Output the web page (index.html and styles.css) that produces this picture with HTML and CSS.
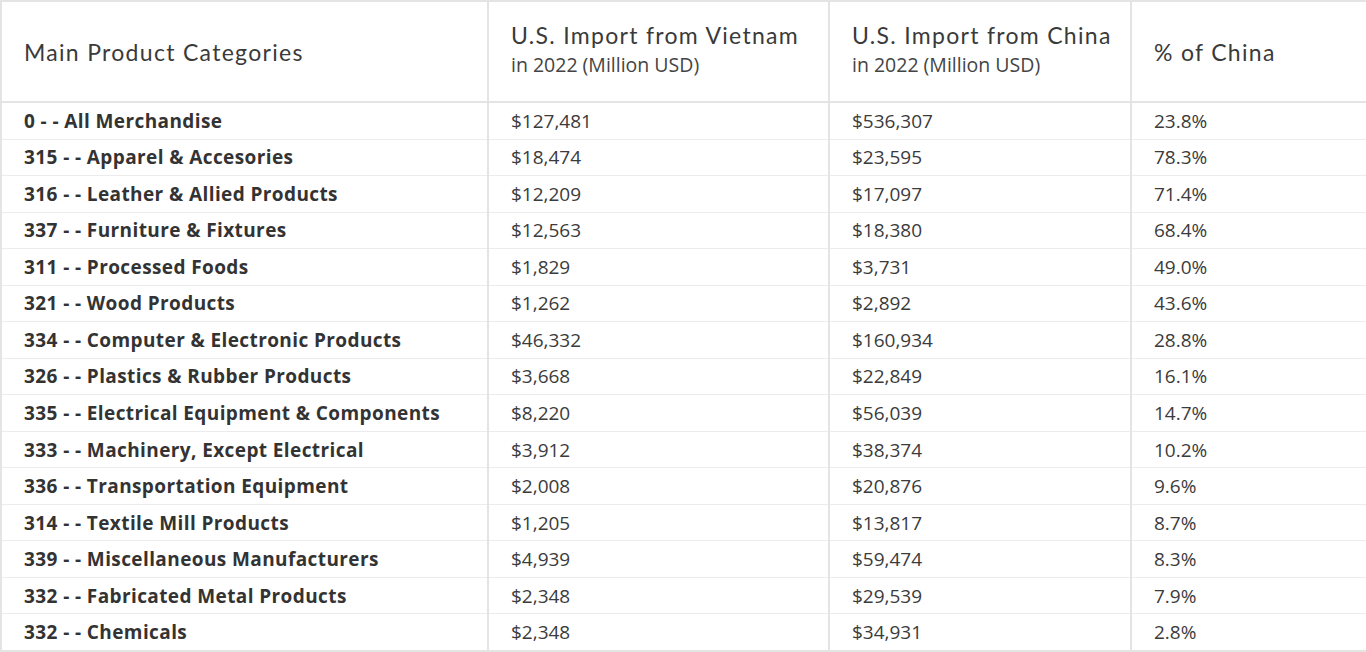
FILE: index.html
```html
<!DOCTYPE html>
<html lang="en">
<head>
<meta charset="utf-8">
<title>U.S. Imports from Vietnam vs China 2022</title>
<link rel="stylesheet" href="styles.css">
</head>
<body>
<table class="data-table">
  <colgroup>
    <col class="col-cat">
    <col class="col-vn">
    <col class="col-cn">
    <col class="col-pct">
  </colgroup>
  <thead>
    <tr>
      <th><span class="th-title">Main Product Categories</span></th>
      <th><span class="th-title">U.S. Import from Vietnam</span><span class="th-sub">in 2022 (Million USD)</span></th>
      <th><span class="th-title">U.S. Import from China</span><span class="th-sub">in 2022 (Million USD)</span></th>
      <th><span class="th-title">% of China</span></th>
    </tr>
  </thead>
  <tbody>
    <tr><td class="cat">0 - - All Merchandise</td><td>$127,481</td><td>$536,307</td><td>23.8%</td></tr>
    <tr><td class="cat">315 - - Apparel &amp; Accesories</td><td>$18,474</td><td>$23,595</td><td>78.3%</td></tr>
    <tr><td class="cat">316 - - Leather &amp; Allied Products</td><td>$12,209</td><td>$17,097</td><td>71.4%</td></tr>
    <tr><td class="cat">337 - - Furniture &amp; Fixtures</td><td>$12,563</td><td>$18,380</td><td>68.4%</td></tr>
    <tr><td class="cat">311 - - Processed Foods</td><td>$1,829</td><td>$3,731</td><td>49.0%</td></tr>
    <tr><td class="cat">321 - - Wood Products</td><td>$1,262</td><td>$2,892</td><td>43.6%</td></tr>
    <tr><td class="cat">334 - - Computer &amp; Electronic Products</td><td>$46,332</td><td>$160,934</td><td>28.8%</td></tr>
    <tr><td class="cat">326 - - Plastics &amp; Rubber Products</td><td>$3,668</td><td>$22,849</td><td>16.1%</td></tr>
    <tr><td class="cat">335 - - Electrical Equipment &amp; Components</td><td>$8,220</td><td>$56,039</td><td>14.7%</td></tr>
    <tr><td class="cat">333 - - Machinery, Except Electrical</td><td>$3,912</td><td>$38,374</td><td>10.2%</td></tr>
    <tr><td class="cat">336 - - Transportation Equipment</td><td>$2,008</td><td>$20,876</td><td>9.6%</td></tr>
    <tr><td class="cat">314 - - Textile Mill Products</td><td>$1,205</td><td>$13,817</td><td>8.7%</td></tr>
    <tr><td class="cat">339 - - Miscellaneous Manufacturers</td><td>$4,939</td><td>$59,474</td><td>8.3%</td></tr>
    <tr><td class="cat">332 - - Fabricated Metal Products</td><td>$2,348</td><td>$29,539</td><td>7.9%</td></tr>
    <tr><td class="cat">332 - - Chemicals</td><td>$2,348</td><td>$34,931</td><td>2.8%</td></tr>
  </tbody>
</table>
</body>
</html>
```
FILE: styles.css
```css
html, body {
  margin: 0;
  padding: 0;
  background: #ffffff;
}
body {
  font-family: "Open Sans", "Liberation Sans", sans-serif;
  color: #333333;
}
.data-table {
  width: 1366px;
  height: 652px;
  border-collapse: collapse;
  table-layout: fixed;
  border: 2px solid #e4e4e4;
}
.col-cat { width: 487px; }
.col-vn { width: 341px; }
.col-cn { width: 302px; }
.col-pct { width: 236px; }

.data-table th {
  height: 99px;
  padding: 0 0 0 22px;
  text-align: left;
  vertical-align: middle;
  font-weight: 400;
  border-left: 2px solid #e4e4e4;
  border-bottom: 2px solid #e4e4e4;
}
.th-title {
  display: block;
  font-family: "Lato", "Open Sans", sans-serif;
  font-weight: 400;
  font-size: 23px;
  letter-spacing: 1.3px;
  line-height: 28px;
  color: #3a3a3a;
}
.th-sub {
  display: block;
  font-size: 19.5px;
  line-height: 28px;
  color: #444444;
  margin-top: 2px;
  margin-bottom: 4px;
}
.data-table td {
  height: 35.5px;
  padding: 0 0 0 22px;
  font-size: 19px;
  line-height: 24px;
  vertical-align: middle;
  white-space: nowrap;
  border-left: 2px solid #e4e4e4;
  border-bottom: 1px solid #ececec;
  color: #3b3b3b;
}
.data-table td.cat {
  font-weight: 700;
  letter-spacing: 0.4px;
  color: #333333;
}
```
